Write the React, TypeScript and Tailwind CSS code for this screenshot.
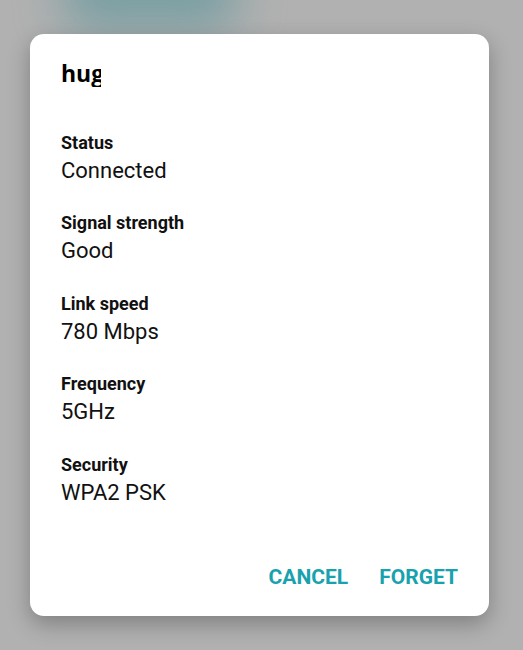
import React from "react";

const rows: { label: string; value: string }[] = [
  { label: "Status", value: "Connected" },
  { label: "Signal strength", value: "Good" },
  { label: "Link speed", value: "780 Mbps" },
  { label: "Frequency", value: "5GHz" },
  { label: "Security", value: "WPA2 PSK" },
];

export default function App() {
  return (
    <div className="relative w-[523px] h-[650px] overflow-hidden bg-[#b1b1b1] pt-[34px] pl-[30px]">
      <div className="absolute left-[60px] top-[-40px] w-[180px] h-[70px] rounded-full bg-[#7a9fa3] blur-[22px]" />
      <div className="relative flex flex-col w-[459px] h-[582px] bg-white rounded-[14px] shadow-[0_8px_22px_rgba(0,0,0,0.28)] font-['Roboto',sans-serif]">
        <div className="pt-[25px] pl-[31px]">
          <div className="w-[40px] overflow-hidden whitespace-nowrap font-['Open_Sans',sans-serif] font-bold text-[23px] leading-[28px] text-black">
            hugo
          </div>
        </div>
        <div className="flex flex-col gap-[27.4px] pl-[31px] mt-[45px]">
          {rows.map((r) => (
            <div key={r.label} className="flex flex-col">
              <div className="text-[18px] leading-[22px] font-bold text-[#111]">{r.label}</div>
              <div className="mt-[3px] text-[22px] leading-[28px] text-[#111]">{r.value}</div>
            </div>
          ))}
        </div>
        <div className="mt-auto flex justify-end gap-[31px] pr-[31px] pb-[27px]">
          <span className="text-[21px] leading-[24px] font-bold text-[#17a2ae]">CANCEL</span>
          <span className="text-[21px] leading-[24px] font-bold text-[#17a2ae]">FORGET</span>
        </div>
      </div>
    </div>
  );
}
